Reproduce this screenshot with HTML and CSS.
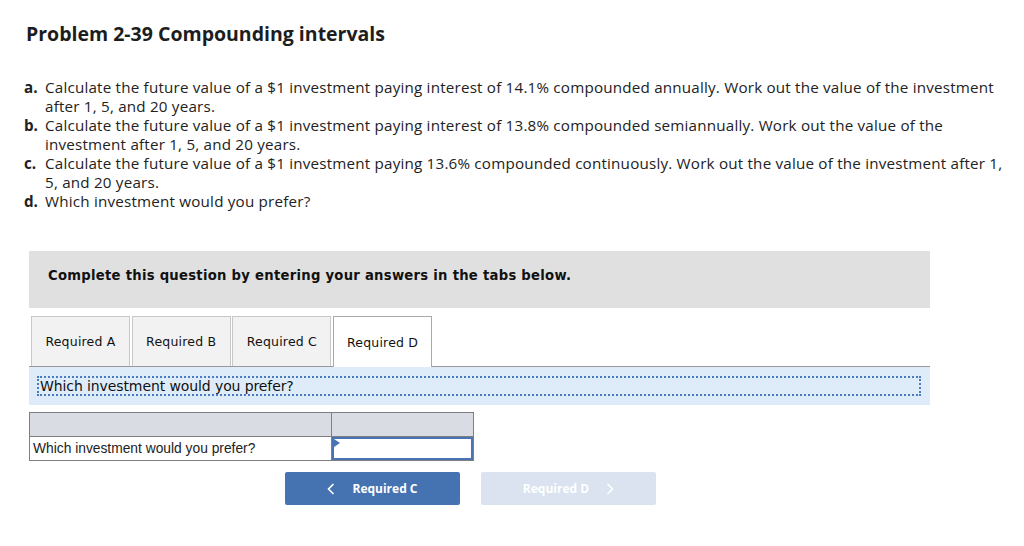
FILE: index.html
```html
<!DOCTYPE html>
<html>
<head>
    <title>Problem 2-39 Compounding intervals</title>
    <meta name="viewport" content="width=device-width, initial-scale=1.0">
    <link rel="stylesheet" href="styles.css">
</head>
<body>
    <div class="page">
        <h1 class="title">Problem 2-39 Compounding intervals</h1>

        <ol class="parts">
            <li><span class="mark">a.</span><span>Calculate the future value of a $1 investment paying interest of 14.1% compounded annually. Work out the value of the investment after 1, 5, and 20 years.</span></li>
            <li><span class="mark">b.</span><span>Calculate the future value of a $1 investment paying interest of 13.8% compounded semiannually. Work out the value of the investment after 1, 5, and 20 years.</span></li>
            <li><span class="mark">c.</span><span>Calculate the future value of a $1 investment paying 13.6% compounded continuously. Work out the value of the investment after 1, 5, and 20 years.</span></li>
            <li><span class="mark">d.</span><span>Which investment would you prefer?</span></li>
        </ol>

        <div class="question">
            <div class="banner">Complete this question by entering your answers in the tabs below.</div>

            <div class="tabs">
                <div class="tab">Required A</div>
                <div class="tab">Required B</div>
                <div class="tab">Required C</div>
                <div class="tab active">Required D</div>
            </div>

            <div class="prompt">
                <div class="prompt-text">Which investment would you prefer?</div>
            </div>

            <table class="answer">
                <tr class="head">
                    <td class="label"></td>
                    <td class="value"></td>
                </tr>
                <tr>
                    <td class="label">Which investment would you prefer?</td>
                    <td class="value input"><span class="flag"></span></td>
                </tr>
            </table>

            <div class="nav">
                <a href="#" class="nav-btn prev">
                    <svg class="chev" width="8" height="12" viewBox="0 0 8 12"><path d="M6.5 1 L1.5 6 L6.5 11" fill="none" stroke="#fff" stroke-width="1.6"/></svg>
                    Required C
                </a>
                <a href="#" class="nav-btn next">
                    Required D
                    <svg class="chev" width="8" height="12" viewBox="0 0 8 12"><path d="M1.5 1 L6.5 6 L1.5 11" fill="none" stroke="#fff" stroke-width="1.6"/></svg>
                </a>
            </div>
        </div>
    </div>
</body>
</html>
```

FILE: styles.css
```css
body {
    margin: 0;
    background: #fff;
    color: #222;
    font-family: "Open Sans", "Liberation Sans", sans-serif;
}
.page {
    padding: 22px 0 0 24px;
    width: 990px;
}
.title {
    font-size: 19.5px;
    font-weight: 700;
    margin: 0 0 0 2px;
    line-height: 24px;
    color: #1d1d1d;
}
.parts {
    list-style: none;
    margin: 32px 0 0;
    padding: 0;
    font-size: 15.2px;
    line-height: 19px;
    letter-spacing: 0.2px;
}
.parts li {
    display: flex;
}
.mark {
    font-weight: 700;
    width: 21px;
    flex: none;
    letter-spacing: 0;
}
.question {
    margin: 40px 0 0 5px;
    width: 901px;
    font-family: "DejaVu Sans", Verdana, sans-serif;
}
.banner {
    background: #e0e0e0;
    height: 57px;
    box-sizing: border-box;
    padding: 0 0 8px 19px;
    display: flex;
    align-items: center;
    font-size: 13.2px;
    font-weight: 700;
    color: #111;
    letter-spacing: 0.27px;
}
.tabs {
    display: flex;
    gap: 1.7px;
    margin-top: 8px;
    padding-left: 2px;
    border-bottom: 1px solid #999;
}
.tab {
    width: 97px;
    height: 49px;
    border: 1px solid #c8c8c8;
    border-bottom: none;
    background: #f2f2f2;
    display: flex;
    align-items: center;
    justify-content: center;
    font-size: 12.5px;
    color: #111;
    letter-spacing: 0.2px;
}
.tab.active {
    background: #fff;
    border-color: #aaa;
    margin-bottom: -1px;
    height: 50px;
}
.prompt {
    background: #deecf9;
    padding: 9px 9px 9px 8px;
}
.prompt-text {
    border: 2px dotted #4a7ac0;
    font-size: 14px;
    line-height: 16px;
    padding: 0 0 0 1px;
    color: #111;
    letter-spacing: -0.1px;
}
.answer {
    border-collapse: collapse;
    margin-top: 7px;
    font-family: "Liberation Sans", Arial, sans-serif;
    font-size: 13.8px;
}
.answer td {
    border: 1px solid #7f7f7f;
    padding: 0 3px;
    height: 23px;
}
.answer .head td {
    background: #d9dce3;
    height: 23px;
}
.answer .label {
    width: 295px;
}
.answer .value {
    width: 135px;
}
.answer .input {
    position: relative;
    box-shadow: inset 0 0 0 2px #4a73b5;
}
.flag {
    position: absolute;
    left: 2px;
    top: 2px;
    border-left: 6px solid #4a73b5;
    border-top: 4px solid transparent;
    border-bottom: 4px solid transparent;
}
.nav {
    display: flex;
    gap: 21px;
    margin: 11px 0 0 256px;
}
.nav-btn {
    width: 175px;
    height: 33px;
    border-radius: 2px;
    display: flex;
    align-items: center;
    justify-content: center;
    font-family: "Open Sans", "Liberation Sans", sans-serif;
    font-size: 12px;
    font-weight: 700;
    color: #fff;
    text-decoration: none;
}
.prev {
    background: #4573b1;
}
.next {
    background: #dae3ef;
}
.prev .chev {
    margin-right: 17px;
}
.next .chev {
    margin-left: 17px;
}
```
